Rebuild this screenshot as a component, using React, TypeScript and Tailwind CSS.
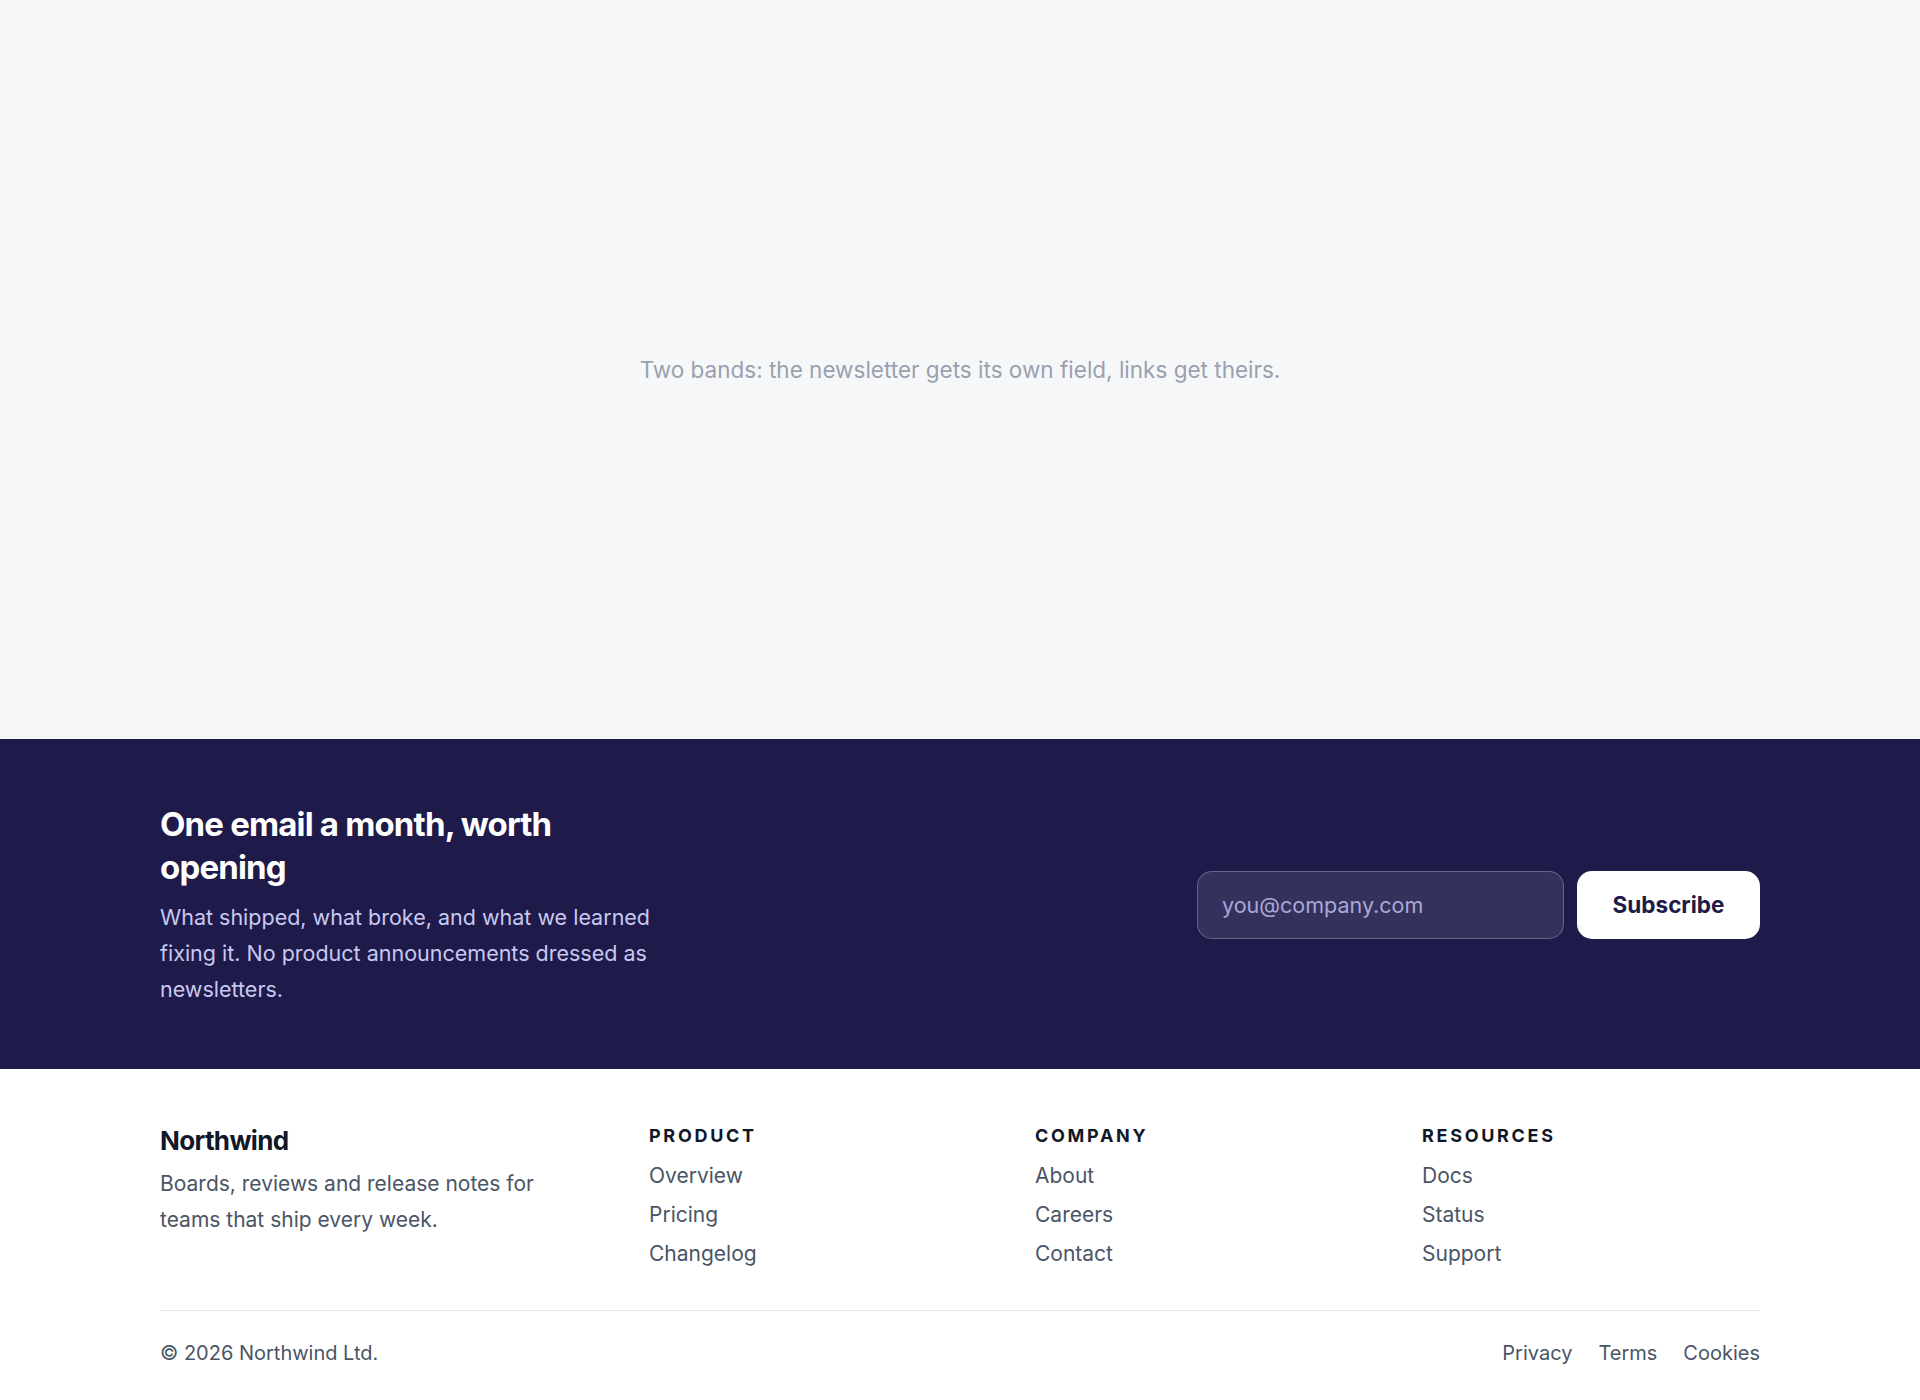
export default function App() {
  return (
    <div className="min-h-[1400px] bg-white font-['Inter',sans-serif] antialiased">
      {/* Page body placeholder */}
      <main className="flex h-[739px] items-center justify-center bg-[#f6f7f9]">
        <p className="text-[22.5px] text-gray-400">
          Two bands: the newsletter gets its own field, links get theirs.
        </p>
      </main>

      {/* Newsletter band */}
      <section className="bg-[#1e1b4b]">
        <div className="mx-auto flex max-w-[1600px] items-center justify-between pt-16 pb-[62px]">
          <div className="max-w-[520px]">
            <h2 className="max-w-[460px] text-[33px] leading-[43px] font-bold tracking-tight text-white">
              One email a month, worth opening
            </h2>
            <p className="mt-[10px] text-[21.5px] leading-[36px] text-[#c9c8f0]">
              What shipped, what broke, and what we learned fixing it. No product
              announcements dressed as newsletters.
            </p>
          </div>
          <form className="flex items-center gap-[13px]">
            <input
              type="email"
              placeholder="you@company.com"
              className="h-[68px] w-[367px] rounded-[15px] border border-white/25 bg-white/10 px-6 text-[21.5px] text-white outline-none placeholder:text-[#a9a7d8]"
            />
            <button
              type="button"
              className="h-[68px] w-[183px] rounded-[15px] bg-white text-[22.5px] font-bold text-[#1e1b4b]"
            >
              Subscribe
            </button>
          </form>
        </div>
      </section>

      {/* Link footer */}
      <footer className="bg-white">
        <div className="mx-auto max-w-[1600px] pt-[54px]">
          <div className="grid grid-cols-[489px_386px_387px_1fr]">
            <div>
              <div className="text-[26px] leading-[35px] font-bold tracking-tight text-gray-900">
                Northwind
              </div>
              <p className="mt-[8px] max-w-[400px] text-[21px] leading-[36px] text-gray-600">
                Boards, reviews and release notes for teams that ship every week.
              </p>
            </div>
            <FooterColumn title="Product" links={["Overview", "Pricing", "Changelog"]} />
            <FooterColumn title="Company" links={["About", "Careers", "Contact"]} />
            <FooterColumn title="Resources" links={["Docs", "Status", "Support"]} />
          </div>

          <div className="mt-[42px] flex items-center justify-between border-t border-gray-200 pt-[28px] pb-[32px] text-[20px] leading-[28px] text-gray-600">
            <span>© 2026 Northwind Ltd.</span>
            <nav className="flex gap-[26px]">
              <a href="#">Privacy</a>
              <a href="#">Terms</a>
              <a href="#">Cookies</a>
            </nav>
          </div>
        </div>
      </footer>
    </div>
  );
}

function FooterColumn({ title, links }: { title: string; links: string[] }) {
  return (
    <div>
      <h3 className="text-[18px] leading-[25px] font-bold tracking-[0.15em] text-gray-900 uppercase">
        {title}
      </h3>
      <ul className="mt-[14px] flex flex-col gap-[11px]">
        {links.map((link) => (
          <li key={link}>
            <a href="#" className="text-[21px] leading-[28px] text-gray-600">
              {link}
            </a>
          </li>
        ))}
      </ul>
    </div>
  );
}
